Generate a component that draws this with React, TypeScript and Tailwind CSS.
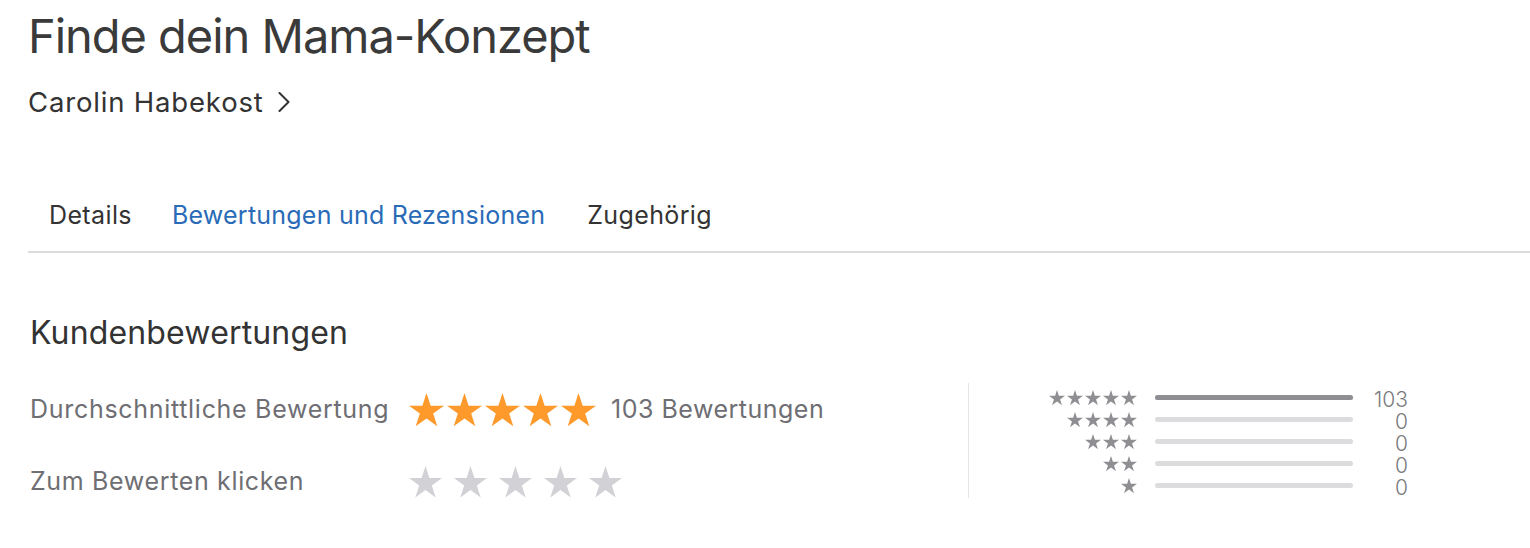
import React from "react";

const STAR =
  "50,0 61.8,36.33 100,36.33 69.1,58.78 80.9,95.1 50,72.65 19.1,95.1 30.9,58.78 0,36.33 38.2,36.33";

function Star({ className }: { className: string }) {
  return (
    <svg viewBox="0 0 100 95.1" className={className}>
      <polygon points={STAR} fill="currentColor" />
    </svg>
  );
}

const hist = [
  { stars: 5, pct: 100, count: "103" },
  { stars: 4, pct: 0, count: "0" },
  { stars: 3, pct: 0, count: "0" },
  { stars: 2, pct: 0, count: "0" },
  { stars: 1, pct: 0, count: "0" },
];

export default function App() {
  return (
    <div className="min-h-[548px] bg-white pl-[28px] [font-family:Inter,sans-serif] text-[#333333]">
      <h1 className="text-[47px] leading-[72px] font-normal tracking-[-0.022em] text-[#3a3a3a]">
        Finde dein Mama-Konzept
      </h1>
      <div className="flex h-[60px] items-center">
        <span className="text-[27.5px] leading-[60px] tracking-[0.03em] text-[#333333]">
          Carolin Habekost
        </span>
        <svg className="ml-[14px] h-[20px] w-[12px]" viewBox="0 0 12 20">
          <polyline
            points="1.5,1 10.5,10 1.5,19"
            fill="none"
            stroke="#333333"
            strokeWidth="2"
            strokeLinecap="round"
            strokeLinejoin="round"
          />
        </svg>
      </div>

      <nav className="mt-[58px] flex border-b-2 border-[#dcdcdc] pb-[11px]">
        <span className="pl-[21px] pr-[20px] text-[25px] leading-[50px] tracking-[0.015em] text-[#333333]">
          Details
        </span>
        <span className="pl-[20px] pr-[22px] text-[25px] leading-[50px] tracking-[0.009em] text-[#2a6bb8]">
          Bewertungen und Rezensionen
        </span>
        <span className="px-[20px] text-[25px] leading-[50px] tracking-[0.015em] text-[#333333]">
          Zugehörig
        </span>
      </nav>

      <div className="pl-[2px]">
        <h2 className="mt-[56px] text-[32px] leading-[48px] font-normal tracking-[0.005em] text-[#333333]">
          Kundenbewertungen
        </h2>

        <div className="mt-[17px] flex">
          <div className="w-[938px]">
            <div className="flex h-[72px] items-center">
              <span className="w-[379px] text-[25px] tracking-[0.028em] text-[#6e6e73]">
                Durchschnittliche Bewertung
              </span>
              <div className="flex gap-[3px] text-[#fe9a2c]">
                {[0, 1, 2, 3, 4].map((i) => (
                  <Star key={i} className="h-[33.3px] w-[35px]" />
                ))}
              </div>
              <span className="ml-[15px] text-[25px] tracking-[0.02em] text-[#6e6e73]">
                103 Bewertungen
              </span>
            </div>
            <div className="flex h-[72px] items-center">
              <span className="w-[379px] text-[25px] tracking-[0.026em] text-[#6e6e73]">
                Zum Bewerten klicken
              </span>
              <div className="flex gap-[12px] text-[#d1d1d6]">
                {[0, 1, 2, 3, 4].map((i) => (
                  <Star key={i} className="h-[31.4px] w-[33px]" />
                ))}
              </div>
            </div>
          </div>

          <div className="mt-[8.5px] h-[115px] w-px bg-[#e5e5e5]" />

          <div className="mt-[12.5px] grid h-fit auto-rows-[22px] grid-cols-[168px_198px_37px] items-center gap-x-[18px]">
            {hist.map((r) => (
              <React.Fragment key={r.stars}>
                <div className="flex justify-end gap-[2px] text-[#8e8e93]">
                  {Array.from({ length: r.stars }).map((_, i) => (
                    <Star key={i} className="h-[15.2px] w-[16px]" />
                  ))}
                </div>
                <div className="h-[5px] w-full rounded-full bg-[#dcdcde]">
                  <div
                    className="h-full rounded-full bg-[#8e8e93]"
                    style={{ width: `${r.pct}%` }}
                  />
                </div>
                <div className="mt-[4px] text-right text-[21px] leading-[22px] font-light text-[#7a7a7e]">
                  {r.count}
                </div>
              </React.Fragment>
            ))}
          </div>
        </div>
      </div>
    </div>
  );
}
